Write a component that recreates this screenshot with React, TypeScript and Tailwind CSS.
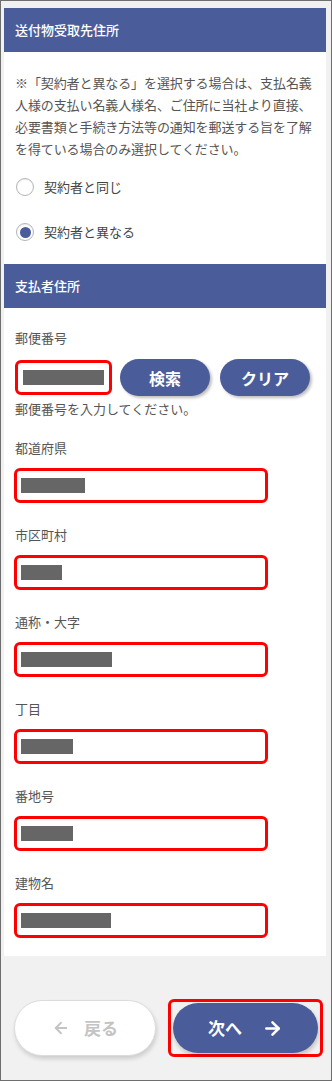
import { ArrowLeft, ArrowRight } from "lucide-react";

const fields = [
  { label: "都道府県", bar: "w-[64px]" },
  { label: "市区町村", bar: "w-[41px]" },
  { label: "通称・大字", bar: "w-[91px]" },
  { label: "丁目", bar: "w-[52px]" },
  { label: "番地号", bar: "w-[52px]" },
  { label: "建物名", bar: "w-[90px]" },
];

function SectionHeader({ title }: { title: string }) {
  return (
    <div className="h-[44px] bg-[#4b5c9a] px-[11px] flex items-center text-[13px] font-medium text-white">
      {title}
    </div>
  );
}

function Radio({ label, checked }: { label: string; checked?: boolean }) {
  return (
    <div className="flex items-center h-[22px] gap-[10px] pl-[1px]">
      <span className="w-[18px] h-[18px] rounded-full border border-[#b5b5b5] bg-white flex items-center justify-center shadow-[inset_0_1px_1px_rgba(0,0,0,0.08)]">
        {checked && <span className="w-[11px] h-[11px] rounded-full bg-[#4b5c9a]" />}
      </span>
      <span className="text-[13px] text-[#444]">{label}</span>
    </div>
  );
}

function Field({ label, bar }: { label: string; bar: string }) {
  return (
    <div className="flex flex-col">
      <div className="h-[20px] leading-[20px] text-[13px] text-[#555]">{label}</div>
      <div className="mt-[10px] -ml-[1px] w-[254px] h-[35px] border-[3px] border-[#ff0000] rounded-[6px] bg-white flex items-center px-[4px]">
        <div className={`${bar} h-[15px] bg-[#666]`} />
      </div>
    </div>
  );
}

export default function App() {
  return (
    <div
      className="w-[332px] h-[1081px] border border-[#6e6e6e] bg-[#f1f1f1] pl-[3px] pr-[5px] pt-[7px] flex flex-col"
      style={{ fontFamily: '"Noto Sans CJK JP", "Noto Sans", sans-serif' }}
    >
      <div className="bg-white pb-[18px]">
        <SectionHeader title="送付物受取先住所" />

        <div className="px-[11px]">
          <p className="mt-[20px] text-[13px] leading-[22px] text-[#555] whitespace-nowrap tracking-[-0.1px]">
            ※「契約者と異なる」を選択する場合は、支払名義
            <br />
            人様の支払い名義人様名、ご住所に当社より直接、
            <br />
            必要書類と手続き方法等の通知を郵送する旨を了解
            <br />
            を得ている場合のみ選択してください。
          </p>
          <div className="mt-[16px] flex flex-col gap-[23px]">
            <Radio label="契約者と同じ" />
            <Radio label="契約者と異なる" checked />
          </div>
        </div>

        <div className="mt-[21px]">
          <SectionHeader title="支払者住所" />
        </div>

        <div className="px-[11px]">
          <div className="mt-[20px] h-[20px] leading-[20px] text-[13px] text-[#555]">郵便番号</div>
          <div className="mt-[11px] flex items-center h-[37px]">
            <div className="w-[97px] h-[35px] border-[3px] border-[#ff0000] rounded-[6px] bg-white flex items-center px-[5px]">
              <div className="w-[81px] h-[15px] bg-[#666]" />
            </div>
            <button className="ml-[8px] w-[90px] h-[37px] rounded-full bg-[#4b5c9a] text-white text-[16px] font-bold shadow-[2px_2px_3px_rgba(0,0,0,0.25)]">
              検索
            </button>
            <button className="ml-[10px] w-[90px] h-[37px] rounded-full bg-[#4b5c9a] text-white text-[16px] font-bold shadow-[2px_2px_3px_rgba(0,0,0,0.25)]">
              クリア
            </button>
          </div>
          <div className="mt-[3px] h-[20px] leading-[20px] text-[13px] text-[#555]">
            郵便番号を入力してください。
          </div>

          <div className="mt-[19px] flex flex-col gap-[22px]">
            {fields.map((f) => (
              <Field key={f.label} label={f.label} bar={f.bar} />
            ))}
          </div>
        </div>
      </div>

      <div className="mt-[43px] flex items-center pl-[10px]">
        <button className="w-[142px] h-[56px] rounded-full bg-white border border-[#dcdcdc] shadow-[1px_3px_4px_rgba(0,0,0,0.15)] flex items-center justify-center gap-[14px] text-[#c4c4c4] text-[17px] font-bold">
          <ArrowLeft size={18} strokeWidth={2.5} />
          <span>戻る</span>
        </button>
        <div className="ml-[12px] w-[155px] h-[58px] border-[3px] border-[#ff0000] rounded-[6px] px-[2px] py-[1px] flex items-center">
          <button className="w-full h-[50px] rounded-full bg-[#4b5c9a] shadow-[1px_3px_4px_rgba(0,0,0,0.2)] flex items-center justify-center gap-[20px] text-white text-[17px] font-bold">
            <span>次へ</span>
            <ArrowRight size={21} strokeWidth={3} />
          </button>
        </div>
      </div>
    </div>
  );
}
